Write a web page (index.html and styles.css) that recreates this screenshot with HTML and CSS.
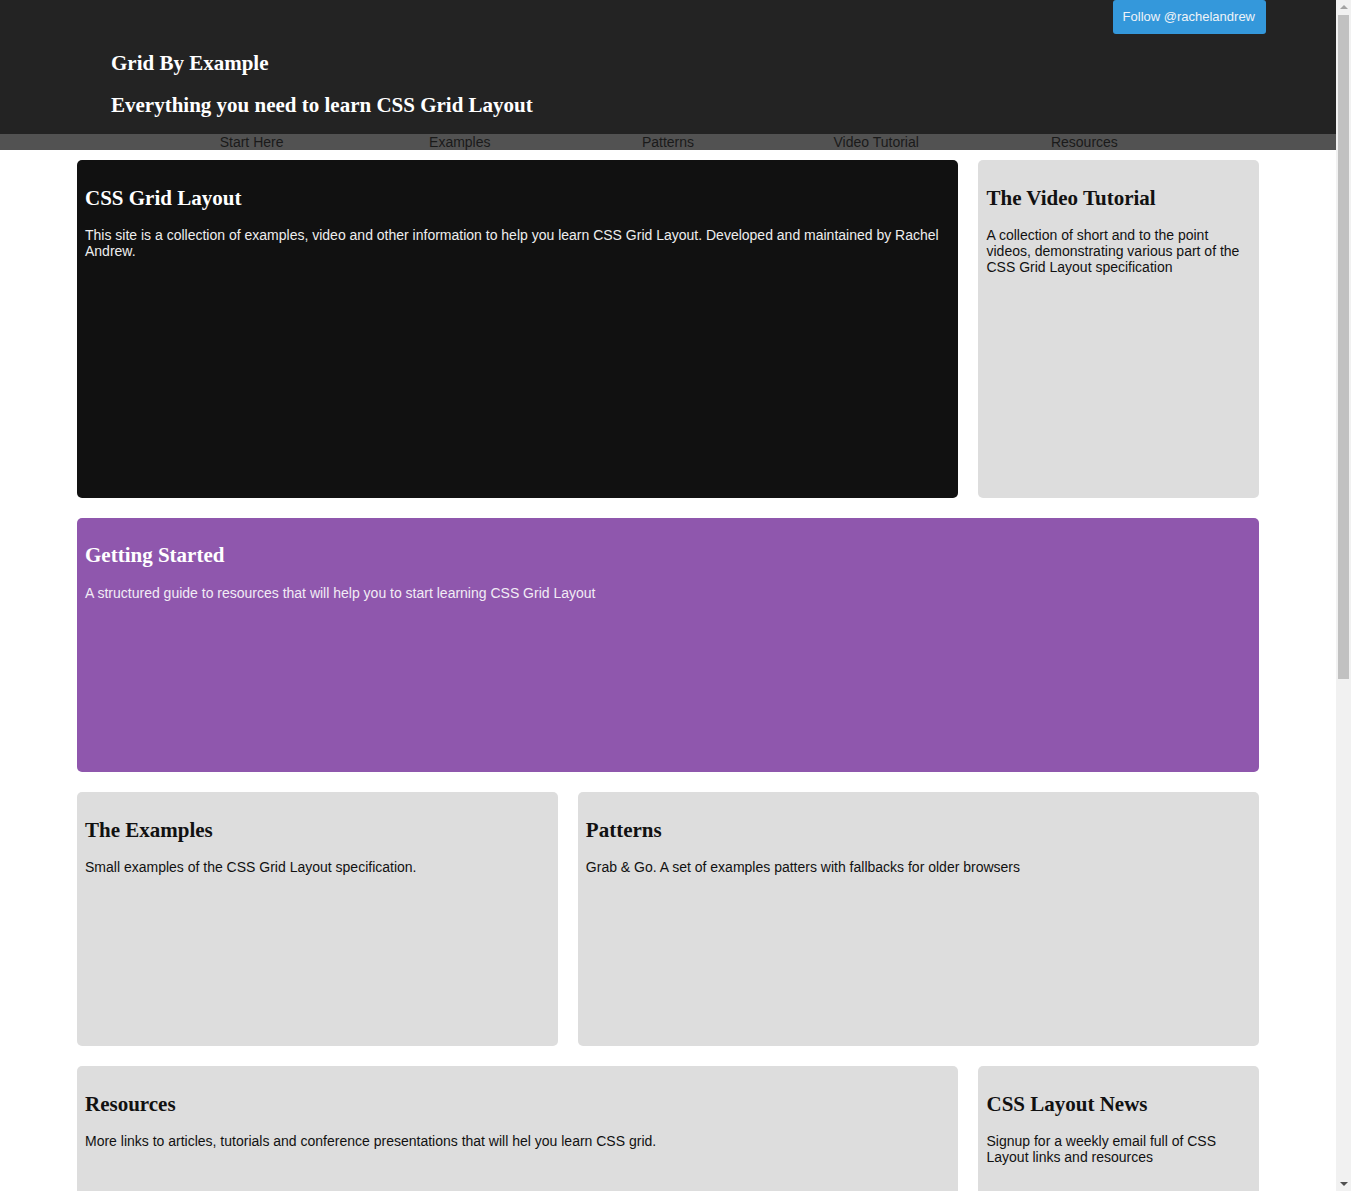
FILE: index.html
```html
<!DOCTYPE html>
<html lang="en">
<head>
<meta charset="utf-8">
<title>Grid By Example</title>
<link rel="stylesheet" href="styles.css">
</head>
<body>
<header class="site-header">
  <div class="follow-row"><a class="follow" href="#">Follow @rachelandrew</a></div>
  <h1 class="site-title">Grid By Example</h1>
  <p class="tagline">Everything you need to learn CSS Grid Layout</p>
</header>
<nav class="site-nav">
  <ul class="nav-list">
    <li><a href="#">Start Here</a></li>
    <li><a href="#">Examples</a></li>
    <li><a href="#">Patterns</a></li>
    <li><a href="#">Video Tutorial</a></li>
    <li><a href="#">Resources</a></li>
  </ul>
</nav>
<main class="grid">
  <section class="card card-dark span-9">
    <h2>CSS Grid Layout</h2>
    <p>This site is a collection of examples, video and other information to help you learn CSS Grid Layout. Developed and maintained by Rachel Andrew.</p>
  </section>
  <section class="card card-light span-3">
    <h2>The Video Tutorial</h2>
    <p>A collection of short and to the point videos, demonstrating various part of the CSS Grid Layout specification</p>
  </section>
  <section class="card card-purple span-12">
    <h2>Getting Started</h2>
    <p>A structured guide to resources that will help you to start learning CSS Grid Layout</p>
  </section>
  <section class="card card-light span-5">
    <h2>The Examples</h2>
    <p>Small examples of the CSS Grid Layout specification.</p>
  </section>
  <section class="card card-light span-7">
    <h2>Patterns</h2>
    <p>Grab &amp; Go. A set of examples patters with fallbacks for older browsers</p>
  </section>
  <section class="card card-light span-9">
    <h2>Resources</h2>
    <p>More links to articles, tutorials and conference presentations that will hel you learn CSS grid.</p>
  </section>
  <section class="card card-light span-3">
    <h2>CSS Layout News</h2>
    <p>Signup for a weekly email full of CSS Layout links and resources</p>
  </section>
</main>
<div class="scrollbar" aria-hidden="true">
  <span class="scroll-arrow scroll-up"></span>
  <span class="scroll-thumb"></span>
  <span class="scroll-arrow scroll-down"></span>
</div>
</body>
</html>
```
FILE: styles.css
```css
html, body {
  margin: 0;
  padding: 0;
}
body {
  font-family: "Liberation Sans", Arial, sans-serif;
  font-size: 14px;
  color: #111;
  background: #fff;
  margin-right: 15px;
}
a {
  text-decoration: none;
}

.site-header {
  background: #232323;
  display: flow-root;
  padding: 0 70px 0 111px;
}
.follow-row {
  display: flex;
  justify-content: flex-end;
}
.follow {
  background: #3498db;
  color: #eef3f8;
  font-size: 13px;
  line-height: 16px;
  padding: 9px 11px 9px 10px;
  border-radius: 3px;
}
.site-title,
.tagline {
  font-family: "Liberation Serif", "Times New Roman", serif;
  font-size: 21px;
  font-weight: bold;
  line-height: 24px;
  color: #fff;
  margin: 17.4px 0;
}

.site-nav {
  background: #525252;
}
.nav-list {
  list-style: none;
  margin: 0 auto;
  padding: 0;
  width: 1041px;
  display: grid;
  grid-template-columns: repeat(5, 1fr);
}
.nav-list li {
  text-align: center;
  line-height: 16px;
}
.nav-list a {
  color: #1a1a1a;
}

.grid {
  width: 1182px;
  margin: 10px auto 20px;
  display: grid;
  grid-template-columns: repeat(12, 1fr);
  grid-template-rows: 337.75px;
  grid-auto-rows: 254.25px;
  gap: 20px;
}
.span-3 { grid-column: span 3; }
.span-5 { grid-column: span 5; }
.span-7 { grid-column: span 7; }
.span-9 { grid-column: span 9; }
.span-12 { grid-column: span 12; }

.card {
  border-radius: 5px;
  padding: 8px;
}
.card h2 {
  font-family: "Liberation Serif", "Times New Roman", serif;
  font-size: 21px;
  font-weight: bold;
  line-height: 24px;
  margin: 0.83em 0;
}
.card p {
  margin: 14px 0;
  line-height: 16px;
}
.card-dark {
  background: #111;
  color: #fff;
}
.card-dark p {
  color: #eee;
}
.card-light {
  background: #ddd;
  color: #111;
}
.card-purple {
  background: #8f57ad;
  color: #fff;
}
.card-purple p {
  color: #f2ecf5;
}

/* imitation of the browser's vertical scrollbar */
.scrollbar {
  position: fixed;
  top: 0;
  right: 0;
  width: 15px;
  height: 100vh;
  background: #f1f1f1;
  display: flex;
  flex-direction: column;
  align-items: center;
}
.scroll-arrow {
  width: 0;
  height: 0;
  border-left: 4px solid transparent;
  border-right: 4px solid transparent;
}
.scroll-up {
  margin-top: 5px;
  border-bottom: 4px solid #a3a3a3;
}
.scroll-thumb {
  width: 11px;
  height: 664px;
  margin-top: 6px;
  background: #c1c1c1;
}
.scroll-down {
  margin-top: auto;
  margin-bottom: 5px;
  border-top: 4px solid #505050;
}
```
